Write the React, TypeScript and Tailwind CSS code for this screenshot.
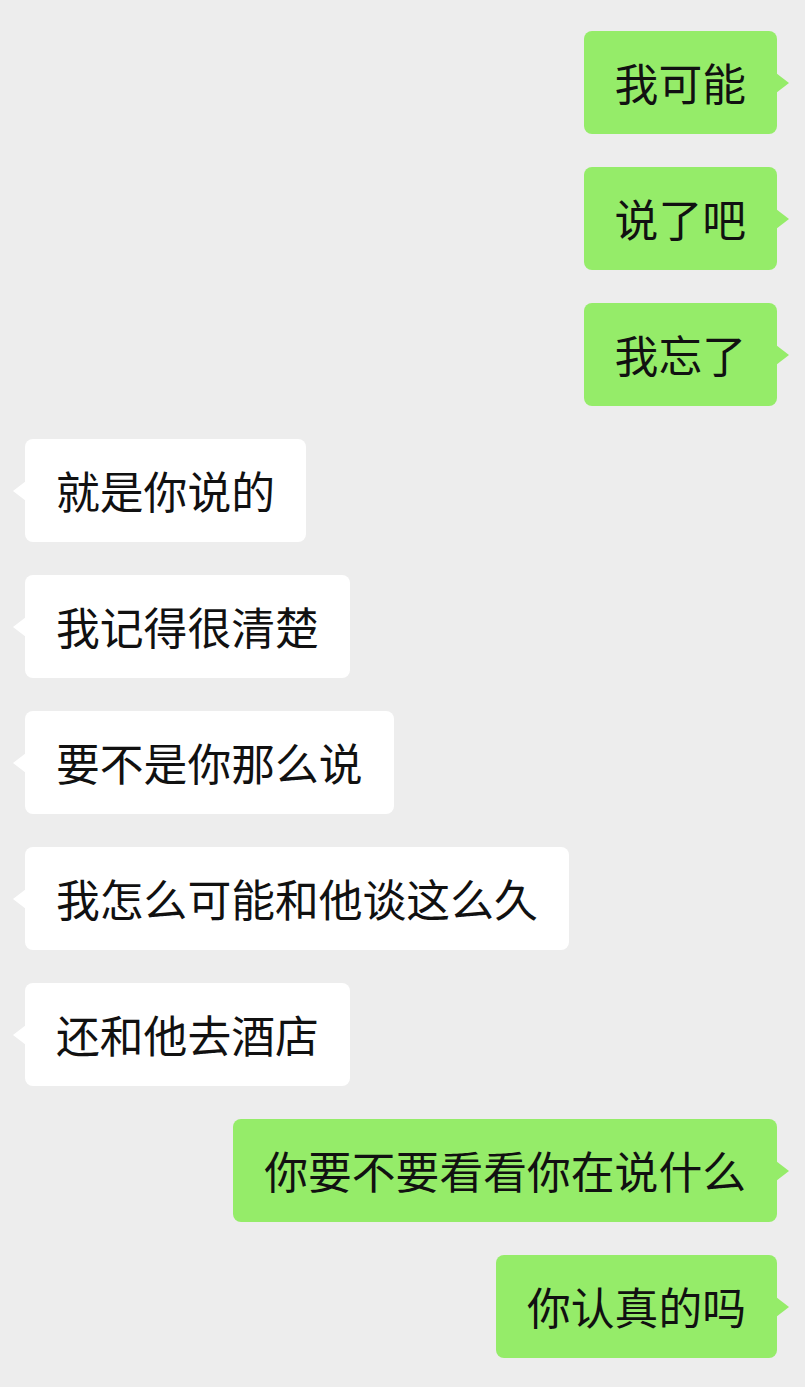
import React from "react";

type Msg = { text: string; mine: boolean };

const messages: Msg[] = [
  { text: "我可能", mine: true },
  { text: "说了吧", mine: true },
  { text: "我忘了", mine: true },
  { text: "就是你说的", mine: false },
  { text: "我记得很清楚", mine: false },
  { text: "要不是你那么说", mine: false },
  { text: "我怎么可能和他谈这么久", mine: false },
  { text: "还和他去酒店", mine: false },
  { text: "你要不要看看你在说什么", mine: true },
  { text: "你认真的吗", mine: true },
];

function Bubble({ text, mine }: Msg) {
  return (
    <div className={mine ? "flex justify-end pr-[28px]" : "flex justify-start pl-[25px]"}>
      <div
        className={
          "relative rounded-[8px] px-[31px] py-[21px] text-[43.8px] leading-[61px] text-[#111] " +
          (mine ? "bg-[#95ec69]" : "bg-white")
        }
      >
        {mine ? (
          <span
            className="absolute right-[-12px] top-1/2 h-0 w-0 -translate-y-1/2 border-y-[10px] border-l-[13px] border-y-transparent border-l-[#95ec69]"
            aria-hidden
          />
        ) : (
          <span
            className="absolute left-[-12px] top-1/2 h-0 w-0 -translate-y-1/2 border-y-[10px] border-r-[13px] border-y-transparent border-r-white"
            aria-hidden
          />
        )}
        <span className="whitespace-nowrap">{text}</span>
      </div>
    </div>
  );
}

export default function App() {
  return (
    <div
      className="flex min-h-[1387px] w-[805px] flex-col gap-[33px] bg-[#ededed] pt-[31px]"
      style={{ fontFamily: '"Noto Sans CJK SC", "Noto Sans", sans-serif' }}
    >
      {messages.map((m, i) => (
        <Bubble key={i} {...m} />
      ))}
    </div>
  );
}
